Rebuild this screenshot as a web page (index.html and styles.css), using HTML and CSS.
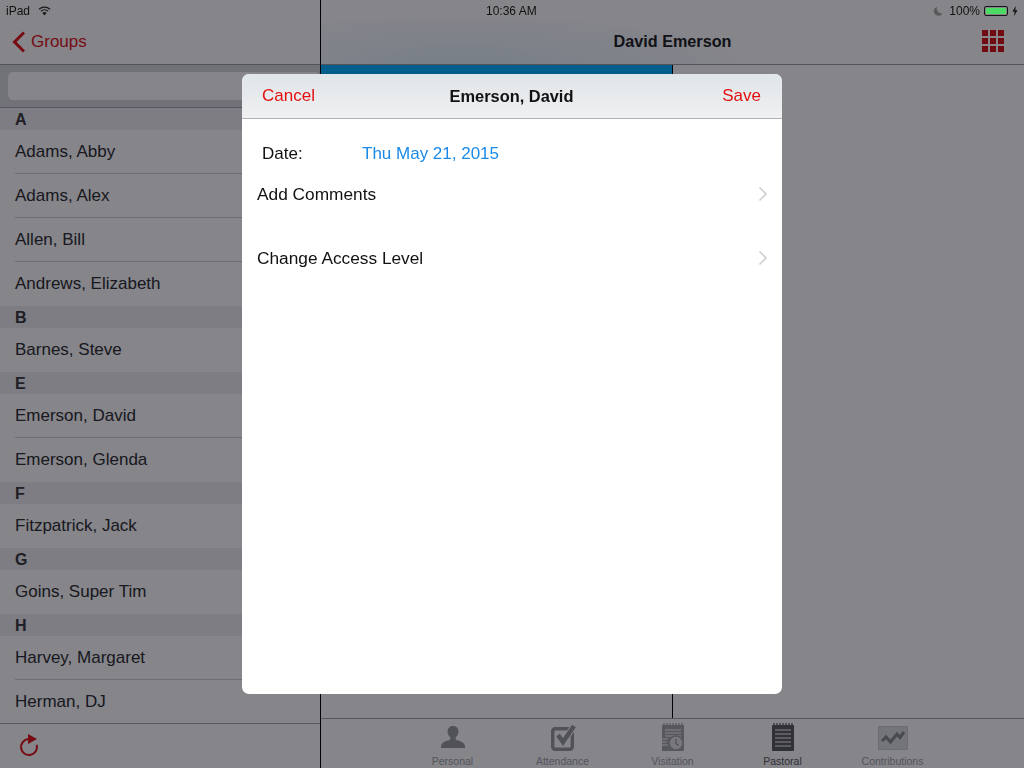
FILE: index.html
```html
<!DOCTYPE html>
<html lang="en">
<head>
    <meta charset="UTF-8">
    <title>David Emerson</title>
    <link rel="stylesheet" href="styles.css">
</head>
<body>
    <div class="app">
        <div class="sidebar">
            <div class="status-left">
                <span>iPad</span>
                <svg class="wifi" width="13" height="10" viewBox="0 0 13 10"><path d="M6.5 9.500 4.400 7a3.200 3.200 0 0 1 4.200 0z" fill="#1a1a1c"/><path d="M2.900 5.300a5.400 5.400 0 0 1 7.200 0M1 3.200a8.300 8.300 0 0 1 11 0" fill="none" stroke="#1a1a1c" stroke-width="1.200"/></svg>
            </div>
            <div class="nav-left">
                <svg width="14" height="22" viewBox="0 0 14 22"><path d="M13 1.500 3.500 11l9.500 9.500" fill="none" stroke="#e01418" stroke-width="3"/></svg>
                <span>Groups</span>
            </div>
            <div class="search-bar"><div class="search-field"></div></div>
            <div class="list">
                <div class="list-head">A</div>
                <div class="list-row">Adams, Abby</div>
                <div class="list-row">Adams, Alex</div>
                <div class="list-row">Allen, Bill</div>
                <div class="list-row last">Andrews, Elizabeth</div>
                <div class="list-head">B</div>
                <div class="list-row last">Barnes, Steve</div>
                <div class="list-head">E</div>
                <div class="list-row">Emerson, David</div>
                <div class="list-row last">Emerson, Glenda</div>
                <div class="list-head">F</div>
                <div class="list-row last">Fitzpatrick, Jack</div>
                <div class="list-head">G</div>
                <div class="list-row last">Goins, Super Tim</div>
                <div class="list-head">H</div>
                <div class="list-row">Harvey, Margaret</div>
                <div class="list-row last">Herman, DJ</div>
            </div>
            <div class="toolbar-left">
                <svg width="22" height="24" viewBox="0 0 22 24"><path d="M10 5.100A8 8 0 1 0 18.700 10.800" fill="none" stroke="#e01418" stroke-width="2"/><path d="M10 0l9 5-9 5z" fill="#e01418"/></svg>
            </div>
        </div>
        <div class="main">
            <div class="main-top">
                <div class="status-main">
                    <span class="clock">10:36 AM</span>
                    <div class="status-right">
                        <svg width="10" height="10" viewBox="0 0 10 10"><path d="M4 .8a4.600 4.600 0 1 0 5.400 6.600A5 5 0 0 1 4 .8z" fill="#59595c"/></svg>
                        <span>100%</span>
                        <div class="battery"><div class="battery-fill"></div></div>
                        <svg width="6" height="10" viewBox="0 0 6 10"><path d="M3.800 0 .4 5.600h2.200L2 10l3.600-5.800H3.300z" fill="#141416"/></svg>
                    </div>
                </div>
                <div class="nav-main">
                    <span class="nav-title">David Emerson</span>
                    <div class="grid-icon">
                        <i></i><i></i><i></i><i></i><i></i><i></i><i></i><i></i><i></i>
                    </div>
                </div>
            </div>
            <div class="content">
                <div class="blue-panel"></div>
                <div class="divider"></div>
            </div>
            <div class="tabs">
                <div class="tab">
                    <svg width="26" height="28" viewBox="0 0 26 28"><path d="M13 3c3.800 0 5.500 2.500 5.500 5.500 0 2.600-1.500 4.600-2.800 5.900v2c2 1.300 8.600 1.700 9.300 6.600v2H1v-2c.7-4.900 7.300-5.300 9.300-6.600v-2C9 13.100 7.500 11.100 7.500 8.500 7.500 5.500 9.200 3 13 3z" fill="#99999d"/></svg>
                    <span>Personal</span>
                </div>
                <div class="tab">
                    <svg width="28" height="28" viewBox="0 0 28 28"><rect x="3.700" y="5.700" width="19.600" height="20.600" rx="2.500" fill="none" stroke="#99999d" stroke-width="3.400"/><path d="M9 12l5 7L25 3" fill="none" stroke="#fdfdfe" stroke-width="6.500"/><path d="M9 12l5 7L25 3" fill="none" stroke="#99999d" stroke-width="4.500"/></svg>
                    <span>Attendance</span>
                </div>
                <div class="tab">
                    <svg width="24" height="28" viewBox="0 0 24 28"><path d="M1 2h22v26H1z" fill="#a6a6aa"/><path d="M3 0v3M6 0v3M9 0v3M12 0v3M15 0v3M18 0v3M21 0v3" stroke="#a6a6aa" stroke-width="1.200"/><path d="M4 7h16M4 10h16M4 13h16M1 16h6M1 19h5M1 22h6" stroke="#fff" stroke-width="1"/><circle cx="15" cy="20" r="7" fill="#e2e2e5" stroke="#a6a6aa" stroke-width="1.600"/><path d="M15 16v4.500l2.500 2" fill="none" stroke="#99999d" stroke-width="1.300"/></svg>
                    <span>Visitation</span>
                </div>
                <div class="tab active">
                    <svg width="24" height="28" viewBox="0 0 24 28"><path d="M2 2h20a1 1 0 0 1 1 1v24a1 1 0 0 1-1 1H2a1 1 0 0 1-1-1V3a1 1 0 0 1 1-1z" fill="#5c5c60"/><path d="M3 0v3M6 0v3M9 0v3M12 0v3M15 0v3M18 0v3M21 0v3" stroke="#5c5c60" stroke-width="1.200"/><path d="M4 7h16M4 11h16M4 15h16M4 19h16M4 23h16" stroke="#fff" stroke-width="1"/></svg>
                    <span>Pastoral</span>
                </div>
                <div class="tab">
                    <svg width="30" height="28" viewBox="0 0 30 28"><path d="M.5 3.500h29v23H.5z" fill="#dcdde0" stroke="#cbcccf"/><path d="M4 18l4-4 4.500 5L19 11l3 3.500L26 9" fill="none" stroke="#8a8a8e" stroke-width="3"/></svg>
                    <span>Contributions</span>
                </div>
            </div>
        </div>
    </div>

    <div class="scrim"></div>

    <div class="modal">
        <div class="modal-head">
            <span class="modal-link">Cancel</span>
            <span class="modal-title">Emerson, David</span>
            <span class="modal-link save">Save</span>
        </div>
        <div class="date-row">
            <span class="date-label">Date:</span>
            <span class="date-value">Thu May 21, 2015</span>
        </div>
        <div class="option-row">
            <span>Add Comments</span>
            <svg width="10" height="16" viewBox="0 0 10 16"><path d="M1.500 1.500 8 8l-6.500 6.500" fill="none" stroke="#cfcfd3" stroke-width="1.600"/></svg>
        </div>
        <div class="option-row">
            <span>Change Access Level</span>
            <svg width="10" height="16" viewBox="0 0 10 16"><path d="M1.500 1.500 8 8l-6.500 6.500" fill="none" stroke="#cfcfd3" stroke-width="1.600"/></svg>
        </div>
    </div>
</body>
</html>
```

FILE: styles.css
```css
* {
    box-sizing: border-box;
}

html, body {
    margin: 0;
    height: 100%;
    overflow: hidden;
}

body {
    font-family: "Liberation Sans", Arial, sans-serif;
    background: #fff;
    color: #000;
}

.app {
    display: flex;
    height: 768px;
    background: #fdfdfe;
}

/* left column */
.sidebar {
    width: 321px;
    flex: none;
    display: flex;
    flex-direction: column;
    height: 768px;
    border-right: 1px solid #000;
}

/* status bar items stay above the scrim, as on the device */
.status-left {
    height: 20px;
    position: relative;
    z-index: 2;
    padding: 2px 0 0 6px;
    display: flex;
    align-items: center;
    gap: 8px;
    font-size: 12px;
    color: #111;
}

.nav-left {
    height: 45px;
    display: flex;
    align-items: center;
    gap: 6px;
    padding: 0 0 0 11px;
    font-size: 17px;
    color: #e01418;
    border-bottom: 1px solid #9d9ea2;
}

.search-bar {
    height: 43px;
    padding: 7px 0 0 8px;
    background: #d6d7db;
    border-bottom: 1px solid #a4a5a9;
}

.search-field {
    height: 28px;
    border-radius: 5px;
    background: #fdfdfe;
}

.list {
    flex: 1;
    overflow: hidden;
    color: #2e2e30;
}

.list-head {
    height: 22px;
    padding-left: 15px;
    font-size: 16px;
    font-weight: bold;
    line-height: 23px;
    color: #3a3a3c;
    background: #ededf0;
}

.list-row {
    height: 44px;
    margin-left: 15px;
    font-size: 17px;
    line-height: 43px;
    border-bottom: 1px solid #cfcfd3;
}

.list-row.last {
    border-bottom: none;
}

.toolbar-left {
    height: 45px;
    flex: none;
    padding: 10px 0 0 18px;
    border-top: 1px solid #a8a8ac;
}

/* right column */
.main {
    flex: 1;
    display: flex;
    flex-direction: column;
    height: 768px;
}

.main-top {
    background: radial-gradient(ellipse 290px 50px at 140px 100%, #e4f2fa, rgba(228, 242, 250, 0));
}

.status-main {
    height: 20px;
    position: relative;
    z-index: 2;
    display: flex;
    justify-content: flex-end;
    padding-top: 2px;
    font-size: 12px;
    color: #111;
}

.clock {
    position: absolute;
    left: 165px;
    top: 4px;
}

.status-right {
    display: flex;
    align-items: center;
    gap: 3px;
    padding-right: 6px;
}

.status-right span {
    margin: 0 1px 0 3px;
}

.battery {
    width: 24px;
    height: 10px;
    padding: 1px;
    border: 1px solid #141416;
    border-radius: 2px;
    margin-right: 1px;
}

.battery-fill {
    height: 100%;
    border-radius: 1px;
    background: #4cd964;
}

.nav-main {
    height: 45px;
    display: flex;
    align-items: center;
    justify-content: center;
    position: relative;
    padding-bottom: 1px;
    border-bottom: 1px solid #9d9ea2;
}

.nav-title {
    font-size: 16.200px;
    font-weight: bold;
    color: #222;
}

.grid-icon {
    position: absolute;
    right: 20px;
    top: 10px;
    width: 22px;
    display: grid;
    grid-template-columns: repeat(3, 6px);
    grid-auto-rows: 6px;
    gap: 2px;
}

.grid-icon i {
    background: #d81216;
}

.content {
    flex: 1;
    display: flex;
}

.blue-panel {
    width: 351px;
    height: 10px;
    background: #08b1ff;
}

.divider {
    width: 1px;
    background: #000;
}

.tabs {
    height: 50px;
    flex: none;
    display: flex;
    justify-content: center;
    border-top: 1px solid #a8a8ac;
}

.tab {
    width: 110px;
    padding-top: 4px;
    display: flex;
    flex-direction: column;
    align-items: center;
    font-size: 10.500px;
    color: #a0a0a3;
    line-height: 12px;
}

.tab svg {
    margin-bottom: 4px;
}

.tab.active {
    color: #58585c;
}

.scrim {
    position: fixed;
    inset: 0;
    background: rgba(2, 3, 12, 0.48);
}

/* modal */
.modal {
    position: absolute;
    left: 242px;
    top: 74px;
    width: 540px;
    height: 620px;
    border-radius: 7px;
    overflow: hidden;
    background: #fff;
}

.modal-head {
    height: 45px;
    display: grid;
    grid-template-columns: 1fr auto 1fr;
    align-items: center;
    padding: 0 21px 0 20px;
    font-size: 17px;
    background: linear-gradient(#e0e5e9, #eff0f1);
    border-bottom: 1px solid #b2b2b4;
}

.modal-link {
    color: #e2100f;
}

.modal-link.save {
    text-align: right;
}

.modal-title {
    font-size: 16.400px;
    font-weight: bold;
    color: #111;
}

.date-row {
    display: flex;
    height: 24px;
    margin-top: 23px;
    padding-left: 20px;
    font-size: 17px;
    line-height: 24px;
}

.date-label {
    width: 100px;
    color: #111;
}

.date-value {
    color: #1a8ae8;
}

.option-row {
    display: flex;
    justify-content: space-between;
    align-items: center;
    height: 24px;
    margin-top: 16px;
    padding: 0 14px 0 15px;
    font-size: 17.300px;
    color: #111;
}

.option-row + .option-row {
    margin-top: 40px;
}
```
